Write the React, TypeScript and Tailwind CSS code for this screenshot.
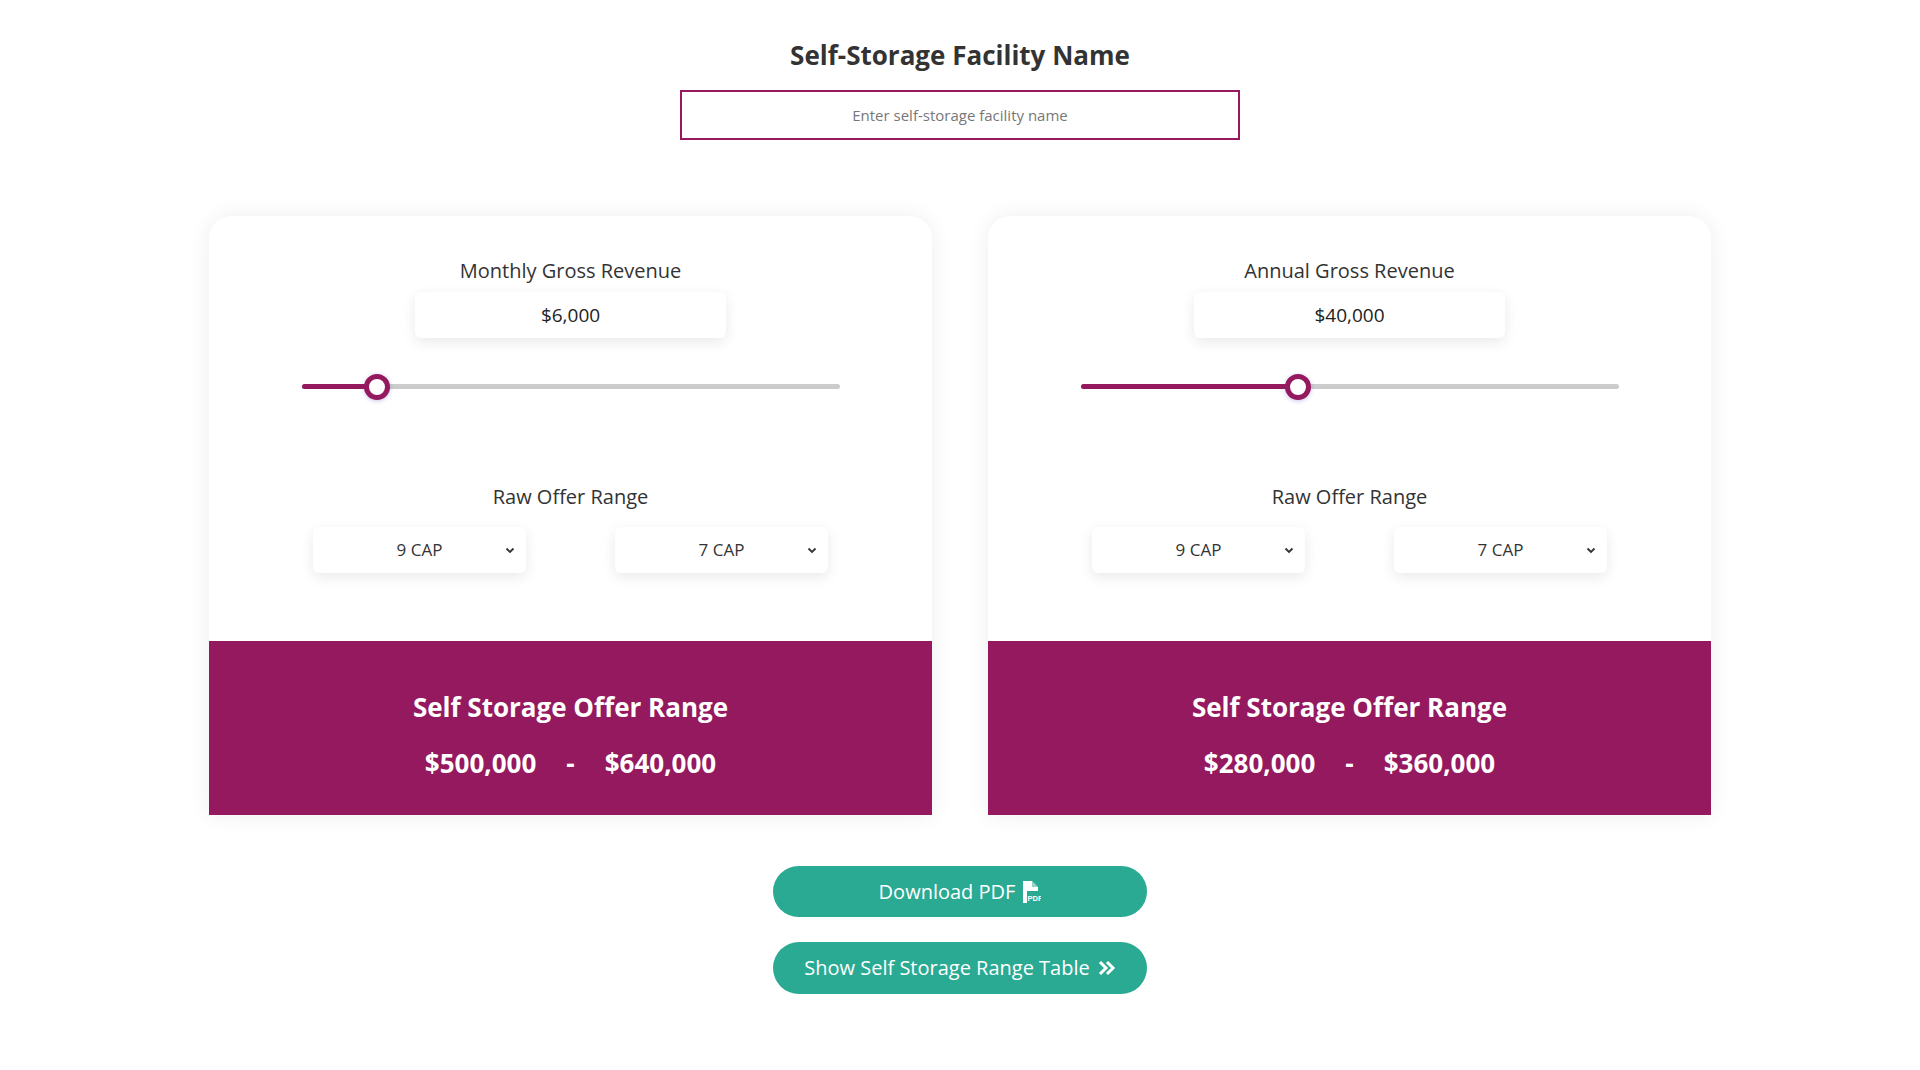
const font = { fontFamily: '"Open Sans", "Noto Sans", sans-serif' };

function Chevron() {
  return (
    <svg width="12" height="12" viewBox="0 0 12 12" className="absolute right-2.5 top-1/2 -translate-y-1/2">
      <path d="M2.5 4.5 6 8l3.5-3.5" fill="none" stroke="#333" strokeWidth="1.8" />
    </svg>
  );
}

function Select({ value }: { value: string }) {
  return (
    <div className="relative flex h-[46px] w-[213px] items-center justify-center rounded-md bg-white text-[17px] text-[#333] shadow-[0_4px_14px_rgba(0,0,0,0.09)]">
      {value}
      <Chevron />
    </div>
  );
}

function Card({ label, value, pct, low, high }: { label: string; value: string; pct: number; low: string; high: string }) {
  return (
    <div className="flex w-[723px] flex-col overflow-hidden rounded-t-[22px] bg-white shadow-[0_0_22px_rgba(0,0,0,0.07)]">
      <div className="flex h-[425px] flex-col items-center pt-[41px]">
        <div className="text-[20px] leading-[28px] text-[#333]">{label}</div>
        <div className="mt-[7px] flex h-[46px] w-[311px] items-center justify-center rounded-md bg-white text-[19px] text-[#222] shadow-[0_4px_14px_rgba(0,0,0,0.09)]">
          {value}
        </div>
        <div className="relative mt-[46px] h-[5px] w-[538px] rounded-full bg-[#cccccc]">
          <div className="absolute left-0 top-0 h-[5px] rounded-full bg-[#95195e]" style={{ width: `${pct}%` }} />
          <div
            className="absolute top-1/2 h-[26px] w-[26px] -translate-x-1/2 -translate-y-1/2 rounded-full border-[5px] border-[#95195e] bg-white shadow-[0_1px_4px_rgba(80,60,200,0.3)]"
            style={{ left: `${pct}%` }}
          />
        </div>
        <div className="mt-[94px] text-[20px] leading-[28px] text-[#333]">Raw Offer Range</div>
        <div className="mt-[16px] flex gap-[89px]">
          <Select value="9 CAP" />
          <Select value="7 CAP" />
        </div>
      </div>
      <div className="flex h-[174px] flex-col items-center bg-[#95195e] pt-[49px] font-bold text-white">
        <div className="text-[26px] leading-[34px]">Self Storage Offer Range</div>
        <div className="mt-[22px] flex gap-[30px] text-[26px] leading-[34px]">
          <span>{low}</span>
          <span>-</span>
          <span>{high}</span>
        </div>
      </div>
    </div>
  );
}

export default function App() {
  return (
    <div className="flex min-h-[1070px] flex-col items-center bg-white" style={font}>
      <h1 className="mt-[38px] text-[26px] font-bold leading-[34px] text-[#333]">Self-Storage Facility Name</h1>
      <input
        placeholder="Enter self-storage facility name"
        className="mt-[18px] h-[50px] w-[560px] border-2 border-[#95195e] text-center text-[15px] outline-none placeholder:text-[#777]"
      />
      <div className="mt-[76px] flex gap-[56px]">
        <Card label="Monthly Gross Revenue" value="$6,000" pct={14} low="$500,000" high="$640,000" />
        <Card label="Annual Gross Revenue" value="$40,000" pct={40.5} low="$280,000" high="$360,000" />
      </div>
      <button className="mt-[51px] flex h-[51px] w-[374px] items-center justify-center gap-1.5 rounded-full bg-[#2aaa92] text-[20px] text-white">
        Download PDF
        <svg width="20" height="22" viewBox="0 0 20 22">
          <path d="M2 0h9l6 6v4H6v12H2z" fill="white" />
          <path d="M11 0v6h6z" fill="#2aaa92" opacity="0.5" />
          <text x="6.5" y="20" fontSize="7.5" fontWeight="700" fill="white" fontFamily="Liberation Sans, sans-serif">PDF</text>
        </svg>
      </button>
      <button className="mt-[25px] flex h-[52px] w-[374px] items-center justify-center gap-2 rounded-full bg-[#2aaa92] text-[20px] text-white">
        Show Self Storage Range Table
        <svg width="18" height="16" viewBox="0 0 18 16">
          <path d="M2 2l6 6-6 6M9 2l6 6-6 6" fill="none" stroke="white" strokeWidth="3" />
        </svg>
      </button>
    </div>
  );
}
